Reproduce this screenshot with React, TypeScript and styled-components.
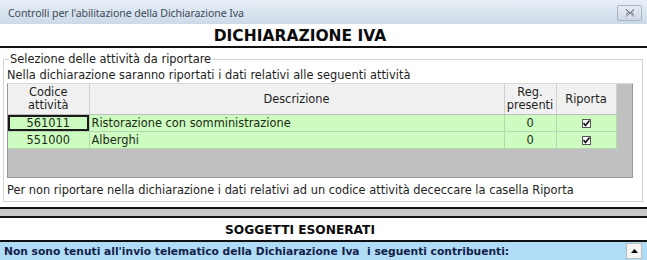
import React from "react";
import styled, { createGlobalStyle } from "styled-components";

const GlobalStyle = createGlobalStyle`
  html, body {
    margin: 0;
    padding: 0;
    background: #ffffff;
  }
  body {
    font-family: "DejaVu Sans", Verdana, sans-serif;
  }
`;

interface Attivita {
  codice: string;
  descrizione: string;
  registri: number;
  riporta: boolean;
}

const attivita: Attivita[] = [
  { codice: "561011", descrizione: "Ristorazione con somministrazione", registri: 0, riporta: true },
  { codice: "551000", descrizione: "Alberghi", registri: 0, riporta: true },
];

const App = () => {
  return (
    <>
      <GlobalStyle />
      <StyledWindow>
        <StyledTitleBar>
          <StyledTitle>Controlli per l'abilitazione della Dichiarazione Iva</StyledTitle>
          <StyledClose>
            <svg width="10" height="8" viewBox="0 0 10 8">
              <path d="M1 0.5 L4 3 L1 5.5 M9 0.5 L6 3 L9 5.5 M1 0.5 L9 7.5 M9 0.5 L1 7.5" stroke="#6b7686" strokeWidth="1" fill="none" />
            </svg>
          </StyledClose>
        </StyledTitleBar>

        <StyledSectionTitle size={15.5}>DICHIARAZIONE IVA</StyledSectionTitle>

        <StyledGroup>
          <StyledLegend>Selezione delle attività da riportare</StyledLegend>
          <StyledNote>Nella dichiarazione saranno riportati i dati relativi alle seguenti attività</StyledNote>
          <StyledGrid>
            <StyledTable>
              <colgroup>
                <col style={{ width: 81 }} />
                <col style={{ width: 415 }} />
                <col style={{ width: 52 }} />
                <col style={{ width: 60 }} />
              </colgroup>
              <thead>
                <tr>
                  <StyledHead>Codice<br />attività</StyledHead>
                  <StyledHead>Descrizione</StyledHead>
                  <StyledHead>Reg.<br />presenti</StyledHead>
                  <StyledHead>Riporta</StyledHead>
                </tr>
              </thead>
              <tbody>
                {attivita.map((a, i) => (
                  <tr key={a.codice}>
                    <StyledCell align="center" focused={i === 0}>{a.codice}</StyledCell>
                    <StyledCell align="left">{a.descrizione}</StyledCell>
                    <StyledCell align="center">{a.registri}</StyledCell>
                    <StyledCell align="center">
                      <StyledCheck>
                        {a.riporta && (
                          <svg width="7" height="7" viewBox="0 0 7 7">
                            <path d="M0.5 3 L2.5 5.5 L6.5 0.5" stroke="#111" strokeWidth="1.6" fill="none" />
                          </svg>
                        )}
                      </StyledCheck>
                    </StyledCell>
                  </tr>
                ))}
              </tbody>
            </StyledTable>
          </StyledGrid>
          <StyledNote>Per non riportare nella dichiarazione i dati relativi ad un codice attività dececcare la casella Riporta</StyledNote>
        </StyledGroup>

        <StyledSeparator />

        <StyledSectionTitle size={12.2}>SOGGETTI ESONERATI</StyledSectionTitle>

        <StyledListHeader>
          <StyledListText>Non sono tenuti all'invio telematico della Dichiarazione Iva&nbsp; i seguenti contribuenti:</StyledListText>
          <StyledScrollButton>
            <svg width="7" height="4" viewBox="0 0 7 4">
              <path d="M0 4 L3.5 0 L7 4 Z" fill="#000" />
            </svg>
          </StyledScrollButton>
        </StyledListHeader>
        <StyledListBody>
          <StyledScrollTrack />
        </StyledListBody>
      </StyledWindow>
    </>
  );
};

const StyledWindow = styled.div`
  width: 647px;
  height: 260px;
  overflow: hidden;
  background: #ffffff;
  display: flex;
  flex-direction: column;
`;

const StyledTitleBar = styled.div`
  height: 24px;
  flex-shrink: 0;
  display: flex;
  align-items: center;
  justify-content: space-between;
  padding: 2px 5px 0 8px;
  box-sizing: border-box;
  background: linear-gradient(to bottom, #e9eff6 0%, #d9e4f0 50%, #ccd9e8 100%);
`;

const StyledTitle = styled.span`
  font-family: "Noto Sans", "Open Sans", sans-serif;
  font-size: 10.6px;
  color: #3f4a57;
  letter-spacing: -0.1px;
`;

const StyledClose = styled.div`
  width: 23px;
  height: 14px;
  border: 1px solid #a9b6c6;
  border-radius: 2px;
  background: linear-gradient(to bottom, #e6ecf3, #cfd9e6);
  display: flex;
  align-items: center;
  justify-content: center;
`;

const StyledSectionTitle = styled.div<{ size: number }>`
  height: 20px;
  flex-shrink: 0;
  margin-top: 2px;
  text-align: center;
  font-family: "DejaVu Sans", Verdana, sans-serif;
  font-weight: bold;
  font-size: ${({ size }) => size}px;
  line-height: 21px;
  color: #0b0b0b;
  padding-right: 47px;
  border-bottom: 2px solid #111111;
`;

const StyledGroup = styled.fieldset`
  margin: 5px 4px 0 3px;
  padding: 1px 3px 3px 3px;
  border: 1px solid #d3d3d3;
  box-shadow: inset 1px 1px 0 #ffffff, 1px 1px 0 #ffffff;
  min-width: 0;
  height: 151px;
  box-sizing: border-box;
`;

const StyledLegend = styled.legend`
  padding: 0 2px 0 1px;
  margin-left: 2px;
  font-size: 11.4px;
  line-height: 13px;
  color: #222222;
`;

const StyledNote = styled.div`
  font-size: 11.4px;
  line-height: 16px;
  color: #1e1e1e;
  white-space: nowrap;
`;

const StyledGrid = styled.div`
  margin: 0 0 4px 0;
  height: 95px;
  width: 626px;
  background: #c0c0c0;
  border: 1px solid #9a9a9a;
  border-top-color: #d8d8d8;
  box-sizing: border-box;
`;

const StyledTable = styled.table`
  border-collapse: collapse;
  table-layout: fixed;
  width: 608px;
  font-size: 11.4px;
`;

const StyledHead = styled.th`
  height: 30px;
  padding: 0;
  font-weight: normal;
  line-height: 13px;
  color: #1e1e1e;
  background: #f1f1f1;
  border-right: 1px solid #cfcfcf;
  border-bottom: 1px solid #bdbdbd;
  text-align: center;
`;

const StyledCell = styled.td<{ align: "left" | "center"; focused?: boolean }>`
  height: 16px;
  padding: 0 ${({ align }) => (align === "left" ? "2px" : "0")};
  line-height: 14px;
  text-align: ${({ align }) => align};
  color: #1c2a14;
  background: #ccfcc0;
  border-right: 1px solid #b9d4b0;
  border-bottom: 1px solid #b9d4b0;
  white-space: nowrap;
  overflow: hidden;
  box-shadow: ${({ focused }) => (focused ? "inset 0 0 0 2px #1a1a1a" : "none")};
`;

const StyledCheck = styled.span`
  display: inline-flex;
  align-items: center;
  justify-content: center;
  width: 9px;
  height: 9px;
  border: 1px solid #555555;
  background: #ffffff;
  vertical-align: middle;
  box-sizing: border-box;
`;

const StyledSeparator = styled.div`
  flex-shrink: 0;
  margin-top: 5px;
  height: 7px;
  background: #c8c8c8;
  border-top: 2px solid #111111;
  border-bottom: 2px solid #111111;
`;

const StyledListHeader = styled.div`
  flex-shrink: 0;
  height: 18px;
  display: flex;
  align-items: center;
  justify-content: space-between;
  background: #b0dcf6;
  padding-left: 4px;
  padding-right: 5px;
`;

const StyledListText = styled.span`
  font-weight: bold;
  font-size: 10.7px;
  color: #13224a;
  white-space: nowrap;
`;

const StyledScrollButton = styled.div`
  width: 16px;
  height: 16px;
  background: #f4f4f4;
  border: 1px solid #bcbcbc;
  box-sizing: border-box;
  display: flex;
  align-items: center;
  justify-content: center;
`;

const StyledListBody = styled.div`
  flex: 1;
  display: flex;
  justify-content: flex-end;
  padding-right: 5px;
`;

const StyledScrollTrack = styled.div`
  width: 16px;
  background: #f0f0f0;
  border-left: 1px solid #d5d5d5;
`;

export default App;
